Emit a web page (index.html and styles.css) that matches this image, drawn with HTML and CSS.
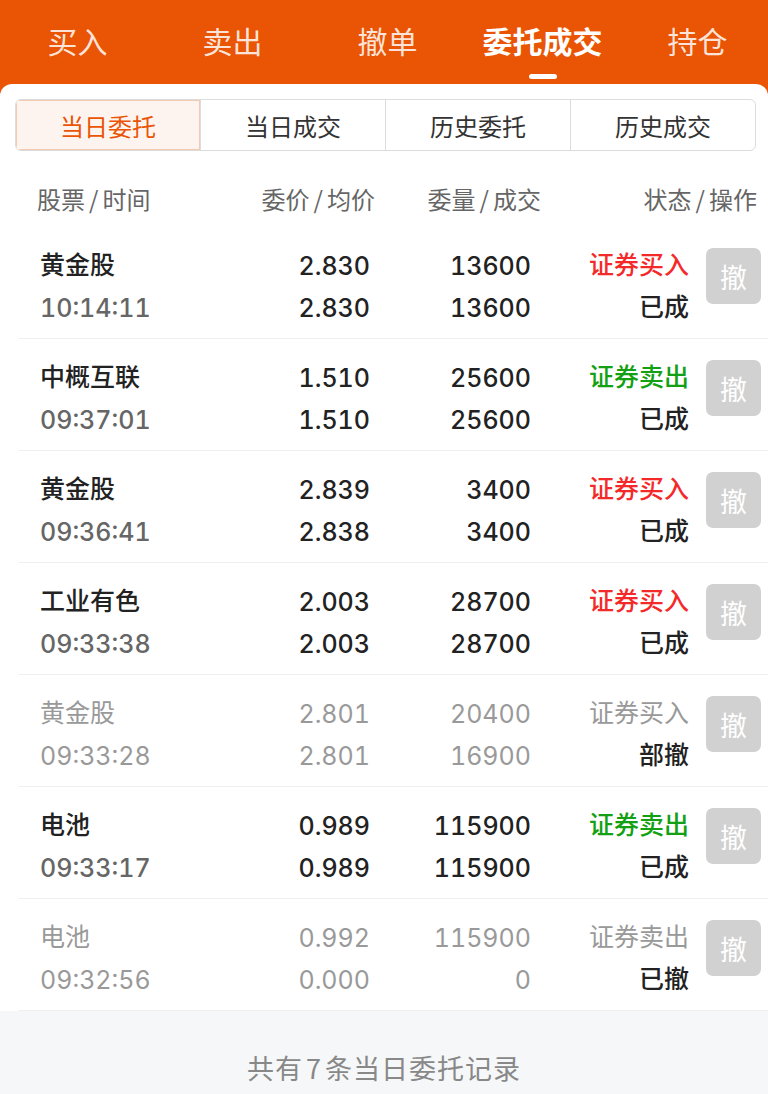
FILE: index.html
```html
<!DOCTYPE html>
<html lang="zh-CN">
<head>
  <meta charset="UTF-8">
  <meta name="viewport" content="width=device-width, initial-scale=1.0">
  <title>委托成交</title>
  <link rel="stylesheet" href="styles.css">
</head>
<body>
  <div class="app">
    <header class="topbar">
      <nav class="tabs">
        <a class="tab">买入</a>
        <a class="tab">卖出</a>
        <a class="tab">撤单</a>
        <a class="tab active">委托成交</a>
        <a class="tab">持仓</a>
      </nav>
    </header>

    <main class="card">
      <div class="seg">
        <div class="seg-item active">当日委托</div>
        <div class="seg-item">当日成交</div>
        <div class="seg-item">历史委托</div>
        <div class="seg-item">历史成交</div>
      </div>

      <div class="thead">
        <span>股票<i>/</i>时间</span>
        <span class="r">委价<i>/</i>均价</span>
        <span class="r">委量<i>/</i>成交</span>
        <span class="r">状态<i>/</i>操作</span>
      </div>

      <ul class="orders">
        <li class="order">
          <div class="cell"><span class="name">黄金股</span><span class="time">10:14:11</span></div>
          <div class="cell r"><span>2.830</span><span>2.830</span></div>
          <div class="cell r"><span>13600</span><span>13600</span></div>
          <div class="cell r"><span class="buy">证券买入</span><span class="state">已成</span></div>
          <button class="cancel">撤</button>
        </li>
        <li class="order">
          <div class="cell"><span class="name">中概互联</span><span class="time">09:37:01</span></div>
          <div class="cell r"><span>1.510</span><span>1.510</span></div>
          <div class="cell r"><span>25600</span><span>25600</span></div>
          <div class="cell r"><span class="sell">证券卖出</span><span class="state">已成</span></div>
          <button class="cancel">撤</button>
        </li>
        <li class="order">
          <div class="cell"><span class="name">黄金股</span><span class="time">09:36:41</span></div>
          <div class="cell r"><span>2.839</span><span>2.838</span></div>
          <div class="cell r"><span>3400</span><span>3400</span></div>
          <div class="cell r"><span class="buy">证券买入</span><span class="state">已成</span></div>
          <button class="cancel">撤</button>
        </li>
        <li class="order">
          <div class="cell"><span class="name">工业有色</span><span class="time">09:33:38</span></div>
          <div class="cell r"><span>2.003</span><span>2.003</span></div>
          <div class="cell r"><span>28700</span><span>28700</span></div>
          <div class="cell r"><span class="buy">证券买入</span><span class="state">已成</span></div>
          <button class="cancel">撤</button>
        </li>
        <li class="order off">
          <div class="cell"><span class="name">黄金股</span><span class="time">09:33:28</span></div>
          <div class="cell r"><span>2.801</span><span>2.801</span></div>
          <div class="cell r"><span>20400</span><span>16900</span></div>
          <div class="cell r"><span class="buy">证券买入</span><span class="state">部撤</span></div>
          <button class="cancel">撤</button>
        </li>
        <li class="order">
          <div class="cell"><span class="name">电池</span><span class="time">09:33:17</span></div>
          <div class="cell r"><span>0.989</span><span>0.989</span></div>
          <div class="cell r"><span>115900</span><span>115900</span></div>
          <div class="cell r"><span class="sell">证券卖出</span><span class="state">已成</span></div>
          <button class="cancel">撤</button>
        </li>
        <li class="order off">
          <div class="cell"><span class="name">电池</span><span class="time">09:32:56</span></div>
          <div class="cell r"><span>0.992</span><span>0.000</span></div>
          <div class="cell r"><span>115900</span><span>0</span></div>
          <div class="cell r"><span class="sell">证券卖出</span><span class="state">已撤</span></div>
          <button class="cancel">撤</button>
        </li>
      </ul>

      <footer class="summary">共有<i>7</i>条当日委托记录</footer>
    </main>
  </div>
</body>
</html>
```

FILE: styles.css
```css
* {
  box-sizing: border-box;
}

body {
  margin: 0;
  background: #f5f7f8;
  font-family: "Inter", "Noto Sans CJK SC", sans-serif;
  color: #222;
}

i {
  font-style: normal;
}

.app {
  background: #e95504;
}

/* top tabs */
.topbar {
  height: 84px;
  overflow: hidden;
}

.tabs {
  display: flex;
  height: 84px;
}

.tab {
  flex: 0 0 155px;
  position: relative;
  padding-top: 25px;
  text-align: center;
  font-family: "Noto Sans CJK SC", sans-serif;
  font-size: 30px;
  line-height: 30px;
  color: rgba(255, 255, 255, 0.85);
}

.tab.active {
  color: #fff;
  font-weight: 700;
}

.tab.active::after {
  content: "";
  position: absolute;
  left: 50%;
  top: 74px;
  width: 28px;
  height: 5px;
  margin-left: -14px;
  border-radius: 3px;
  background: #fff;
}

/* card */
.card {
  background: #fff;
  border-radius: 12px 12px 0 0;
  overflow: hidden;
}

.seg {
  display: flex;
  height: 52px;
  margin: 15px 12px 0 15px;
  border: 1px solid #dcdcdc;
  border-radius: 6px;
  overflow: hidden;
}

.seg-item {
  flex: 1;
  display: flex;
  align-items: center;
  justify-content: center;
  font-family: "Noto Sans CJK SC", sans-serif;
  font-size: 24px;
  color: #333;
  border-left: 1px solid #dcdcdc;
}

.seg-item:first-child {
  border-left: 0;
}

.seg-item.active {
  background: #fdf4f0;
  color: #e95504;
  box-shadow: inset 0 0 0 1px #f3c9b1;
}

.thead {
  display: grid;
  grid-template-columns: 193px 145px 166px 216px;
  height: 76px;
  padding: 35px 0 0 37px;
  font-family: "Noto Sans CJK SC", sans-serif;
  font-size: 24px;
  line-height: 26px;
  color: #666;
}

.thead i {
  margin: 0 4px;
}

.r {
  text-align: right;
}

/* order rows */
.orders {
  list-style: none;
  margin: 0;
  padding: 0 0 0 19px;
}

.order {
  display: grid;
  grid-template-columns: 190px 140px 161px 158px 72px;
  padding: 18px 7px 9px 21px;
  border-bottom: 1px solid #efefef;
}

.cell {
  display: flex;
  flex-direction: column;
  font-size: 25px;
  line-height: 42px;
  font-weight: 500;
  font-variant-numeric: tabular-nums;
  color: #222;
}

.cell .name,
.cell .buy,
.cell .sell,
.cell .state {
  font-family: "Noto Sans CJK SC", sans-serif;
  font-weight: 500;
  line-height: 36px;
  margin-bottom: 6px;
}

.cell .time {
  color: #666;
}

.buy {
  color: #f42a2a;
}

.sell {
  color: #13a013;
}

.cancel {
  justify-self: end;
  align-self: start;
  width: 55px;
  height: 56px;
  margin-top: 3px;
  padding: 0;
  border: 0;
  border-radius: 7px;
  background: #d1d1d1;
  color: #fff;
  font-family: "Noto Sans CJK SC", sans-serif;
  font-size: 27px;
}

.order.off .cell span {
  color: #999;
  font-weight: 400;
}

.order.off .cell .state {
  color: #222;
  font-weight: 500;
}

.summary {
  background: #f5f7f8;
  padding: 40px 0 30px;
  text-align: center;
  font-family: "Noto Sans CJK SC", sans-serif;
  font-size: 27px;
  line-height: 34px;
  letter-spacing: 1px;
  color: #888;
}

.summary i {
  margin: 0 3px;
}
```
